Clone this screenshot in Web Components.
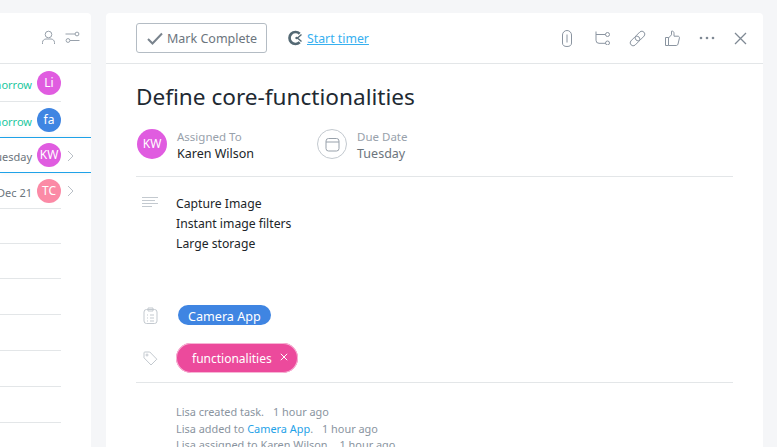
<!DOCTYPE html>
<html>
<head>
<meta charset="utf-8">
<style>
  html, body { margin: 0; padding: 0; height: 100%; overflow: hidden; }
  body {
    background: #f5f6f8;
    font-family: "Noto Sans", "Open Sans", sans-serif;
    color: #212529;
  }
  task-board { display: flex; }
</style>
</head>
<body>
<task-board>
  <task-list></task-list>
  <task-detail></task-detail>
</task-board>

<script>
class TaskBoard extends HTMLElement {
  constructor() {
    super();
    this.attachShadow({ mode: "open" });
  }
  connectedCallback() {
    this.shadowRoot.innerHTML = `
    <style>
      :host { display: flex; gap: 15px; height: 447px; padding-top: 13px; box-sizing: border-box; overflow: hidden; }
    </style>
    <slot></slot>`;
  }
}

class UserAvatar extends HTMLElement {
  constructor() {
    super();
    this.attachShadow({ mode: "open" });
  }
  connectedCallback() {
    const size = this.getAttribute("size") || 24;
    const bg = this.getAttribute("bg") || "#e05ce0";
    const fs = this.getAttribute("fs") || 12;
    this.shadowRoot.innerHTML = `
    <style>
      :host {
        display: flex;
        flex: none;
        align-items: center;
        justify-content: center;
        width: ${size}px;
        height: ${size}px;
        border-radius: 50%;
        background: ${bg};
        color: #fff;
        font-size: ${fs}px;
        line-height: 1;
      }
    </style>
    <slot></slot>`;
  }
}

class TaskRow extends HTMLElement {
  constructor() {
    super();
    this.attachShadow({ mode: "open" });
  }
  connectedCallback() {
    const active = this.hasAttribute("active");
    const color = this.getAttribute("color") || "#6c757d";
    const chevron = this.hasAttribute("chevron");
    const avatar = this.getAttribute("avatar");
    this.shadowRoot.innerHTML = `
    <style>
      :host {
        display: block;
        height: ${this.getAttribute("h") || 36}px;
        box-sizing: border-box;
        ${active ? "border-top: 1px solid #1fa2e8; border-bottom: 1px solid #1fa2e8; box-shadow: 0 0 6px rgba(0,0,0,.06); margin-top: -1px; position: relative;" : ""}
      }
      .in {
        display: flex;
        align-items: center;
        justify-content: flex-end;
        height: 100%;
        width: 61px;
        box-sizing: border-box;
        padding-top: ${this.hasAttribute("nudge") ? 1 : 0}px;
        ${active ? "" : "border-bottom: 1px solid #e3e6e8;"}
        position: relative;
      }
      .date { flex: none; font-size: 11px; color: ${color}; white-space: nowrap; margin: 3px 5px 0 0; }
      svg { position: absolute; left: 67px; top: 12px; }
    </style>
    <div class="in">
      <span class="date"><slot></slot></span>
      ${avatar ? `<user-avatar bg="${this.getAttribute("bg")}">${avatar}</user-avatar>` : ""}
      ${chevron ? `<svg width="7" height="12" viewBox="0 0 7 12" fill="none" stroke="#b9bfc6" stroke-width="1"><path d="M1 1l5 5-5 5"/></svg>` : ""}
    </div>`;
  }
}

class TaskList extends HTMLElement {
  constructor() {
    super();
    this.attachShadow({ mode: "open" });
  }
  connectedCallback() {
    this.shadowRoot.innerHTML = `
    <style>
      :host {
        display: block;
        flex: none;
        width: 91px;
        background: #fff;
        border-radius: 0 4px 0 0;
        overflow: hidden;
      }
      header {
        display: flex;
        justify-content: flex-end;
        align-items: center;
        gap: 9px;
        height: 51px;
        box-sizing: border-box;
        padding: 0 11px 1px 0;
        border-bottom: 1px solid #e3e6e8;
      }
      .rows { display: flex; flex-direction: column; }
    </style>
    <header>
      <svg width="15" height="15" viewBox="0 0 15 15" fill="none" stroke="#98a1ab" stroke-width="1"><circle cx="7.500" cy="4.500" r="3.300"/><path d="M1.500 14v-1.500c0-2.200 1.800-3.500 3.500-3.500h5c1.700 0 3.500 1.300 3.500 3.500V14"/></svg>
      <svg width="15" height="13" viewBox="0 0 15 13" fill="none" stroke="#98a1ab" stroke-width="1"><circle cx="12" cy="3" r="1.900"/><path d="M.5 3H10"/><circle cx="3" cy="9.500" r="1.900"/><path d="M5 9.500h9.500"/></svg>
    </header>
    <div class="rows">
      <task-row h="38" nudge color="#1cc8a0" avatar="Li" bg="#e05ce0">Tomorrow</task-row>
      <task-row color="#1cc8a0" avatar="fa" bg="#3f85e2">Tomorrow</task-row>
      <task-row active chevron color="#6c757d" avatar="KW" bg="#e05ce0">Tuesday</task-row>
      <task-row nudge chevron color="#6c757d" avatar="TC" bg="#fb8aa6">Dec 21</task-row>
      <task-row h="35"></task-row><task-row h="35"></task-row><task-row></task-row>
      <task-row></task-row><task-row></task-row><task-row></task-row>
    </div>`;
  }
}

class IconButton extends HTMLElement {
  constructor() {
    super();
    this.attachShadow({ mode: "open" });
  }
  connectedCallback() {
    this.shadowRoot.innerHTML = `
    <style>
      :host { display: flex; align-items: center; justify-content: center; width: 20px; height: 20px; flex: none; }
    </style>
    <slot></slot>`;
  }
}

class InfoBlock extends HTMLElement {
  constructor() {
    super();
    this.attachShadow({ mode: "open" });
  }
  connectedCallback() {
    this.shadowRoot.innerHTML = `
    <style>
      :host { display: flex; align-items: center; gap: 10px; }
      .txt { display: flex; flex-direction: column; padding-top: 2px; }
      .label { font-size: 11.500px; line-height: 17px; color: #98a1ab; }
      .value { font-size: 12.500px; line-height: 17px; color: ${this.getAttribute("muted") !== null ? "#6c757d" : "#212529"}; }
    </style>
    <slot name="icon"></slot>
    <div class="txt">
      <span class="label">${this.getAttribute("label")}</span>
      <span class="value">${this.getAttribute("value")}</span>
    </div>`;
  }
}

class TagPill extends HTMLElement {
  constructor() {
    super();
    this.attachShadow({ mode: "open" });
  }
  connectedCallback() {
    const removable = this.hasAttribute("removable");
    this.shadowRoot.innerHTML = `
    <style>
      :host {
        display: inline-flex;
        align-items: center;
        background: ${this.getAttribute("bg")};
        color: #fff;
        border-radius: 15px;
        box-sizing: border-box;
        ${removable
          ? "font-size: 12px; height: 30px; padding: 0 10px 0 16px; gap: 8px; box-shadow: inset 0 0 0 1px #f7b5d5;"
          : "font-size: 12.600px; height: 20px; padding: 2px 10px 0;"}
      }
      svg { display: block; margin-top: -2px; }
    </style>
    <slot></slot>
    ${removable ? `<svg width="8" height="8" viewBox="0 0 8 8" stroke="#fff" fill="none"><path d="M.8.8l6.400 6.400M7.200.8.800 7.200"/></svg>` : ""}`;
  }
}

class TaskDetail extends HTMLElement {
  constructor() {
    super();
    this.attachShadow({ mode: "open" });
  }
  connectedCallback() {
    const ic = 'fill="none" stroke="#8a94a0" stroke-width="1"';
    const soft = 'fill="none" stroke="#c3c9cf" stroke-width="1"';
    this.shadowRoot.innerHTML = `
    <style>
      :host {
        display: block;
        flex: none;
        width: 657px;
        background: #fff;
        border-radius: 4px 4px 0 0;
        overflow: hidden;
      }
      a { color: #1fa2e8; }
      .top {
        display: flex;
        align-items: center;
        height: 51px;
        box-sizing: border-box;
        padding: 0 13px 0 30px;
        border-bottom: 1px solid #e3e6e8;
      }
      .complete {
        display: flex;
        align-items: center;
        gap: 4px;
        width: 131px;
        height: 30px;
        box-sizing: border-box;
        padding-left: 10px;
        border: 1px solid #b4bcc4;
        border-radius: 3px;
        font-size: 12.500px;
        color: #6c757d;
      }
      .timer { display: flex; align-items: center; gap: 3px; margin-left: 21px; font-size: 12.300px; }
      .timer a { color: #37b0f0; }
      .tools { display: flex; gap: 15px; margin-left: auto; align-items: center; }
      .tools .close { margin-left: -2px; }
      .body { padding: 0 30px; }
      h1 { margin: 17px 0 0; font-size: 22.600px; line-height: 32px; font-weight: 400; color: #212932; }
      .meta {
        display: flex;
        gap: 63px;
        padding: 13px 0 14px 1px;
        border-bottom: 1px solid #e3e6e8;
      }
      .cal {
        display: flex;
        align-items: center;
        justify-content: center;
        width: 30px;
        height: 30px;
        border: 1px solid #c3c9cf;
        border-radius: 50%;
        box-sizing: border-box;
      }
      .row { display: flex; }
      .gutter { flex: none; width: 40px; display: flex; padding-left: 6px; box-sizing: border-box; }
      .desc { padding-top: 17px; height: 112px; box-sizing: border-box; }
      .desc p { margin: 0; font-size: 12.200px; line-height: 20px; color: #212529; }
      .project { height: 20px; align-items: center; margin-top: 16px; }
      .project .gutter, .tags .gutter { align-items: center; padding-left: 7px; }
      .project tag-pill { margin-left: 2px; }
      .tags { height: 30px; align-items: center; margin-top: 18px; padding-bottom: 9px; border-bottom: 1px solid #e3e6e8; }
      .log { padding: 21px 0 0 40px; font-size: 10.900px; line-height: 16.500px; color: #8a94a0; }
      .log div { display: flex; gap: 9px; white-space: nowrap; }
      .log a { text-decoration: none; }
    </style>
    <div class="top">
      <div class="complete">
        <svg width="16" height="13" viewBox="0 0 16 13" fill="none" stroke="#79838d" stroke-width="2"><path d="M1 7l4.500 4.500L15 1.500"/></svg>
        <span>Mark Complete</span>
      </div>
      <div class="timer">
        <svg width="16" height="16" viewBox="0 0 16 16"><path d="M11.700 3.700A6 6 0 1 0 11.700 12.300" fill="none" stroke="#546974" stroke-width="2.700"/><path d="M13.500 4.500 9.500 8l4 3.500" fill="none" stroke="#546974" stroke-width="1.400"/><circle cx="8.600" cy="8" r="1.300" fill="#546974"/></svg>
        <a href="#">Start timer</a>
      </div>
      <div class="tools">
        <icon-button><svg width="12" height="17" viewBox="0 0 12 17" ${ic}><path d="M6 4.500v8"/><path d="M1.500 13V5a4.500 4.500 0 0 1 9 0v8a4.500 3.500 0 0 1-9 0"/></svg></icon-button>
        <icon-button><svg width="15" height="14" viewBox="0 0 15 14" ${ic}><path d="M1 .5v8.800a3 3 0 0 0 3 3h6.500M1 3.500h9.500"/><circle cx="12.500" cy="3.500" r="2"/><circle cx="12.500" cy="12" r="2"/></svg></icon-button>
        <icon-button><svg width="17" height="17" viewBox="0 0 17 17" ${ic}><path d="M7 10a3 3 0 0 0 4.200 0l4-4A3 3 0 0 0 11 1.800L7 5.800a3 3 0 0 0 0 4.200"/><path d="M10 7a3 3 0 0 0-4.200 0l-4 4A3 3 0 0 0 6 15.200l4-4a3 3 0 0 0 0-4.200"/></svg></icon-button>
        <icon-button><svg width="15" height="16" viewBox="0 0 15 16" ${ic}><path d="M.5 7.500h3v8h-3zM3.500 8l3-3.200V1.200c1.600-.5 2.500.8 2.500 2.100V6.200h4c1 0 1.700.9 1.400 1.900l-1.400 6c-.2.800-.8 1.400-1.700 1.400H3.500"/></svg></icon-button>
        <icon-button><svg width="16" height="4" viewBox="0 0 16 4" fill="#7f8994"><circle cx="2" cy="2" r="1.300"/><circle cx="8" cy="2" r="1.300"/><circle cx="14" cy="2" r="1.300"/></svg></icon-button>
        <icon-button class="close"><svg width="13" height="13" viewBox="0 0 13 13" fill="none" stroke="#7f8994" stroke-width="1.300"><path d="M1 1l11 11M12 1 1 12"/></svg></icon-button>
      </div>
    </div>
    <div class="body">
      <h1>Define core-functionalities</h1>
      <div class="meta">
        <info-block label="Assigned To" value="Karen Wilson">
          <user-avatar slot="icon" size="30" bg="#e05ce0">KW</user-avatar>
        </info-block>
        <info-block muted label="Due Date" value="Tuesday">
          <div slot="icon" class="cal"><svg width="15" height="15" viewBox="0 0 15 15" fill="none" stroke="#98a1ab" stroke-width="1"><rect x="1" y="1.500" width="13" height="12.500" rx="2.500"/><path d="M1 5h13"/></svg></div>
        </info-block>
      </div>
      <div class="row desc">
        <div class="gutter"><svg width="16" height="11" viewBox="0 0 16 11" ${soft} style="margin-top:3px"><path d="M0 .5h16M0 3.500h13M0 6.500h16M0 9.500h10"/></svg></div>
        <div>
          <p>Capture Image</p>
          <p>Instant image filters</p>
          <p>Large storage</p>
        </div>
      </div>
      <div class="row project">
        <div class="gutter"><svg width="15" height="17" viewBox="0 0 15 17" ${soft}><rect x="1" y="2.500" width="13" height="14" rx="2.500"/><path d="M5 1h5v3H5zM4 8h1M7 8h4M4 11h1M7 11h4M4 14h1M7 14h4"/></svg></div>
        <tag-pill bg="#3f85e2">Camera App</tag-pill>
      </div>
      <div class="row tags">
        <div class="gutter"><svg width="15" height="15" viewBox="0 0 15 15" ${soft}><path d="M1 1.800c0-.5.4-.8.800-.8h5l7 7.200-5.800 5.800L1 6.800z"/><circle cx="4" cy="4" r="1"/></svg></div>
        <tag-pill bg="#ec4a9c" removable>functionalities</tag-pill>
      </div>
      <div class="log">
        <div><span>Lisa created task.</span><span>1 hour ago</span></div>
        <div><span>Lisa added to <a href="#">Camera App</a>.</span><span>1 hour ago</span></div>
        <div><span>Lisa assigned to Karen Wilson.</span><span>1 hour ago</span></div>
      </div>
    </div>`;
  }
}

customElements.define("user-avatar", UserAvatar);
customElements.define("task-row", TaskRow);
customElements.define("task-list", TaskList);
customElements.define("icon-button", IconButton);
customElements.define("info-block", InfoBlock);
customElements.define("tag-pill", TagPill);
customElements.define("task-detail", TaskDetail);
customElements.define("task-board", TaskBoard);
</script>
</body>
</html>
